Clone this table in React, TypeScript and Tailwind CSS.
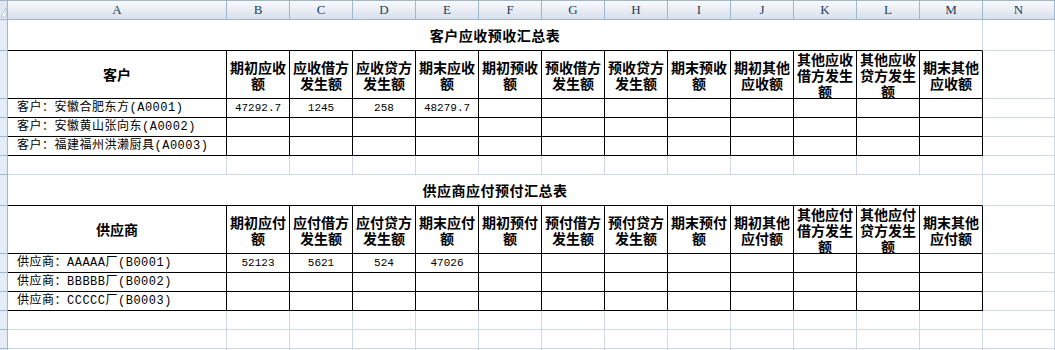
import React from 'react';

const LETTERS = ['B', 'C', 'D', 'E', 'F', 'G', 'H', 'I', 'J', 'K', 'L', 'M'];

const HEAD1 = [
  '期初应收额', '应收借方发生额', '应收贷方发生额', '期末应收额', '期初预收额', '预收借方发生额',
  '预收贷方发生额', '期末预收额', '期初其他应收额', '其他应收借方发生额', '其他应收贷方发生额', '期末其他应收额',
];
const HEAD2 = [
  '期初应付额', '应付借方发生额', '应付贷方发生额', '期末应付额', '期初预付额', '预付借方发生额',
  '预付贷方发生额', '期末预付额', '期初其他应付额', '其他应付借方发生额', '其他应付贷方发生额', '期末其他应付额',
];

function RowHead() {
  return <div className="w-[8px] shrink-0 bg-[#e4ecf7] border-r border-b border-[#9eb6ce]" />;
}

function Cell({
  w,
  rb = false,
  bb = false,
  className = '',
  children,
}: {
  w: string;
  rb?: boolean;
  bb?: boolean;
  className?: string;
  children?: React.ReactNode;
}) {
  return (
    <div
      className={`${w} shrink-0 border-r border-b ${rb ? 'border-r-black' : 'border-r-[#d0d7e5]'} ${
        bb ? 'border-b-black' : 'border-b-[#d0d7e5]'
      } ${className}`}
    >
      {children}
    </div>
  );
}

const CJK_BOLD = "font-['Noto_Sans_CJK_SC',sans-serif] font-bold text-[14px] text-black";
const DATA = "font-['Liberation_Mono','Noto_Sans_CJK_SC',monospace] text-black";

function TitleRow({ title }: { title: string }) {
  return (
    <div className="flex h-[31px]">
      <RowHead />
      <Cell w="w-[975px]" bb className={`flex items-center justify-center tracking-[0.5px] ${CJK_BOLD}`}>
        {title}
      </Cell>
      <Cell w="flex-1" />
    </div>
  );
}

function HeadRow({ first, heads }: { first: string; heads: string[] }) {
  return (
    <div className="flex h-[48px]">
      <RowHead />
      <Cell w="w-[219px]" rb bb className={`flex items-center justify-center ${CJK_BOLD}`}>
        {first}
      </Cell>
      {heads.map((h) => (
        <Cell
          key={h}
          w="w-[63px]"
          rb
          bb
          className={`flex items-center justify-center px-[2px] text-center leading-[16px] ${CJK_BOLD}`}
        >
          <span className="block">{h}</span>
        </Cell>
      ))}
      <Cell w="flex-1" />
    </div>
  );
}

function DataRow({ label, nums }: { label: string; nums: string[] }) {
  const vals = [...nums, ...Array(12 - nums.length).fill('')];
  return (
    <div className="flex h-[19px]">
      <RowHead />
      <Cell w="w-[219px]" rb bb className={`flex items-center pl-[9px] text-[12px] tracking-[0.5px] whitespace-nowrap ${DATA}`}>
        {label}
      </Cell>
      {vals.map((v, i) => (
        <Cell key={i} w="w-[63px]" rb bb className={`flex items-center justify-center text-[11px] ${DATA}`}>
          {v}
        </Cell>
      ))}
      <Cell w="flex-1" />
    </div>
  );
}

function EmptyRow() {
  return (
    <div className="flex h-[19px]">
      <RowHead />
      <Cell w="w-[219px]" />
      {LETTERS.map((l) => (
        <Cell key={l} w="w-[63px]" />
      ))}
      <Cell w="flex-1" />
    </div>
  );
}

function ColumnHeader() {
  const letter = "font-['Liberation_Serif',serif] text-[13px] text-[#243d55] flex items-center justify-center border-r border-[#9eb6ce] shrink-0";
  return (
    <div className="flex h-[20px] border-t border-b border-[#9eb6ce] bg-linear-to-b from-[#f9fbfd] to-[#d8e0eb]">
      <div className="w-[8px] shrink-0 border-r border-[#9eb6ce] bg-[#dfe7f2] relative">
        <svg width="7" height="18" viewBox="0 0 7 18" className="absolute left-0 top-0">
          <polygon points="6,7 6,16 1,16" fill="#ffffff" stroke="#a7b8cc" strokeWidth="0.8" />
        </svg>
      </div>
      <div className={`w-[219px] ${letter}`}>A</div>
      {LETTERS.map((l) => (
        <div key={l} className={`w-[63px] ${letter}`}>
          {l}
        </div>
      ))}
      <div className={`flex-1 ${letter}`}>N</div>
    </div>
  );
}

export default function App() {
  return (
    <div className="w-[1055px] h-[350px] overflow-hidden bg-white">
      <ColumnHeader />
      <TitleRow title="客户应收预收汇总表" />
      <HeadRow first="客户" heads={HEAD1} />
      <DataRow label="客户：安徽合肥东方(A0001)" nums={['47292.7', '1245', '258', '48279.7']} />
      <DataRow label="客户：安徽黄山张向东(A0002)" nums={[]} />
      <DataRow label="客户：福建福州洪濑厨具(A0003)" nums={[]} />
      <EmptyRow />
      <TitleRow title="供应商应付预付汇总表" />
      <HeadRow first="供应商" heads={HEAD2} />
      <DataRow label="供应商：AAAAA厂(B0001)" nums={['52123', '5621', '524', '47026']} />
      <DataRow label="供应商：BBBBB厂(B0002)" nums={[]} />
      <DataRow label="供应商：CCCCC厂(B0003)" nums={[]} />
      <EmptyRow />
      <EmptyRow />
      <EmptyRow />
    </div>
  );
}
